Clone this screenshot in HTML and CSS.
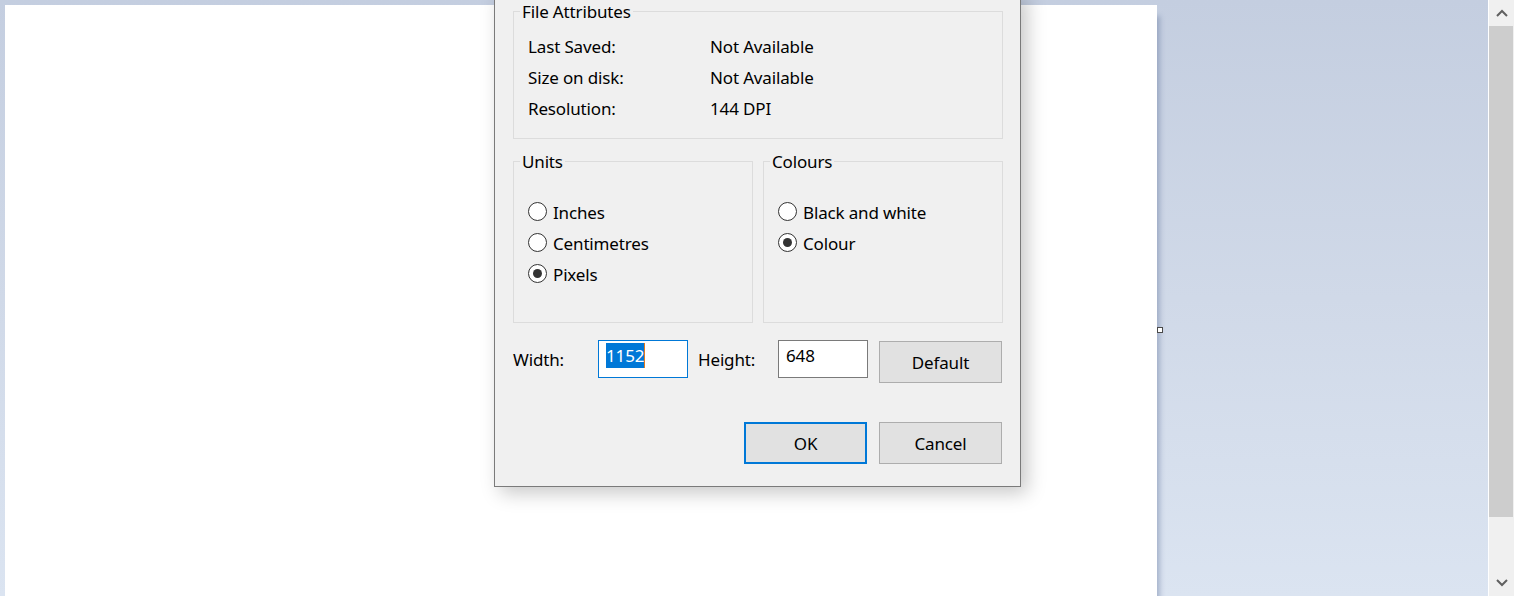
FILE: index.html
```html
<!DOCTYPE html>
<html lang="en">
<head>
<meta charset="utf-8">
<title>Image Properties</title>
<link rel="stylesheet" href="styles.css">
</head>
<body>
<div class="app">
  <div class="workspace">
    <div class="canvas"><span class="handle"></span></div>
  </div>
  <div class="scrollbar">
    <div class="sb-btn">
      <svg width="12" height="8" viewBox="0 0 12 8"><polyline points="1,7 6,2 11,7" fill="none" stroke="#606060" stroke-width="2"/></svg>
    </div>
    <div class="sb-track"><div class="sb-thumb"></div></div>
    <div class="sb-btn">
      <svg width="12" height="8" viewBox="0 0 12 8"><polyline points="1,1 6,6 11,1" fill="none" stroke="#606060" stroke-width="2"/></svg>
    </div>
  </div>

  <div class="dialog">
    <div class="group attrs">
      <div class="legend">File Attributes</div>
      <div class="attr-grid">
        <span>Last Saved:</span><span>Not Available</span>
        <span>Size on disk:</span><span>Not Available</span>
        <span>Resolution:</span><span>144 DPI</span>
      </div>
    </div>

    <div class="groups-row">
      <div class="group choice">
        <div class="legend">Units</div>
        <div class="radios">
          <div class="radio-row"><span class="radio"></span><span>Inches</span></div>
          <div class="radio-row"><span class="radio"></span><span>Centimetres</span></div>
          <div class="radio-row"><span class="radio checked"></span><span>Pixels</span></div>
        </div>
      </div>
      <div class="group choice">
        <div class="legend">Colours</div>
        <div class="radios">
          <div class="radio-row"><span class="radio"></span><span>Black and white</span></div>
          <div class="radio-row"><span class="radio checked"></span><span>Colour</span></div>
        </div>
      </div>
    </div>

    <div class="size-row">
      <span class="lbl lbl-width">Width:</span>
      <div class="field focused"><span class="sel">1152</span><span class="caret"></span></div>
      <span class="lbl lbl-height">Height:</span>
      <div class="field">648</div>
      <div class="btn btn-default">Default</div>
    </div>

    <div class="buttons">
      <div class="btn primary">OK</div>
      <div class="btn">Cancel</div>
    </div>
  </div>
</div>
</body>
</html>
```

FILE: styles.css
```css
html, body {
  margin: 0;
  padding: 0;
}

body {
  width: 1514px;
  height: 596px;
  overflow: hidden;
  font-family: "Noto Sans", "Open Sans", sans-serif;
  font-size: 17px;
  letter-spacing: -0.15px;
  color: #000;
}

.app {
  position: relative;
  display: flex;
  width: 1514px;
  height: 596px;
  overflow: hidden;
}

.workspace {
  flex: 1;
  padding: 5px 0 0 5px;
  background: linear-gradient(180deg, #c4cee0 0%, #d0d9e8 50%, #dbe4f1 100%);
  overflow: hidden;
}

.canvas {
  position: relative;
  width: 1152px;
  height: 648px;
  background: #fff;
  box-shadow: 5px 9px 5px -2px rgba(90, 110, 150, 0.4);
}

.handle {
  position: absolute;
  left: 100%;
  top: 322px;
  width: 6px;
  height: 6px;
  box-sizing: border-box;
  border: 1px solid #4a4a4a;
  background: #fff;
}

.scrollbar {
  width: 25px;
  border-left: 1px solid #fff;
  background: #f0f0f0;
  display: flex;
  flex-direction: column;
}

.sb-btn {
  height: 26px;
  display: flex;
  align-items: center;
  justify-content: center;
}

.sb-track {
  flex: 1;
  padding-right: 1px;
}

.sb-thumb {
  height: 491px;
  background: #cdcdcd;
}

/* Dialog */
.dialog {
  position: absolute;
  left: 494px;
  top: -10px;
  width: 527px;
  box-sizing: border-box;
  border: 1px solid #7a7a7a;
  background: #f0f0f0;
  padding: 20px 17px 22px 18px;
  box-shadow: 6px 6px 18px rgba(0, 0, 0, 0.22);
}

.group {
  box-sizing: border-box;
  border: 1px solid #dcdcdc;
}

.legend {
  width: max-content;
  margin: -11px 0 0 6px;
  padding: 0 2px;
  height: 22px;
  line-height: 22px;
  background: #f0f0f0;
}

.attrs {
  height: 128px;
}

.attr-grid {
  display: grid;
  grid-template-columns: 182px 1fr;
  grid-auto-rows: 31px;
  align-items: center;
  margin-top: 8px;
  padding-left: 14px;
}

.groups-row {
  display: flex;
  gap: 10px;
  margin-top: 22px;
}

.choice {
  width: 240px;
  height: 162px;
}

.radios {
  margin-top: 23px;
  padding-left: 14px;
}

.radio-row {
  display: flex;
  align-items: center;
  gap: 6px;
  height: 31px;
}

.radio-row span:last-child {
  padding-top: 1px;
}

.radio {
  position: relative;
  flex: none;
  width: 19px;
  height: 19px;
  box-sizing: border-box;
  border: 1px solid #333;
  border-radius: 50%;
  background: #fff;
}

.radio.checked::after {
  content: "";
  position: absolute;
  left: 4px;
  top: 4px;
  width: 9px;
  height: 9px;
  border-radius: 50%;
  background: #333;
}

.size-row {
  display: flex;
  align-items: flex-start;
  margin-top: 17px;
}

.lbl {
  line-height: 38px;
  padding-top: 1px;
}

.lbl-width {
  width: 85px;
}

.lbl-height {
  width: 80px;
  margin-left: 10px;
}

.field {
  width: 90px;
  height: 38px;
  box-sizing: border-box;
  border: 1px solid #7a7a7a;
  background: #fff;
  padding: 2px 0 0 7px;
  line-height: 25px;
  display: flex;
  align-items: flex-start;
}

.field.focused {
  border-color: #0078d7;
}

.sel {
  background: #0078d7;
  color: #fff;
  line-height: 25px;
}

.caret {
  width: 1px;
  height: 25px;
  background: #e07a20;
}

.btn {
  width: 123px;
  height: 42px;
  box-sizing: border-box;
  border: 1px solid #adadad;
  background: #e1e1e1;
  display: flex;
  align-items: center;
  justify-content: center;
}

.btn-default {
  margin-left: 11px;
  margin-top: 1px;
}

.btn.primary {
  border: 2px solid #0078d7;
}

.buttons {
  display: flex;
  justify-content: flex-end;
  gap: 12px;
  margin-top: 39px;
  margin-right: 1px;
}
```
